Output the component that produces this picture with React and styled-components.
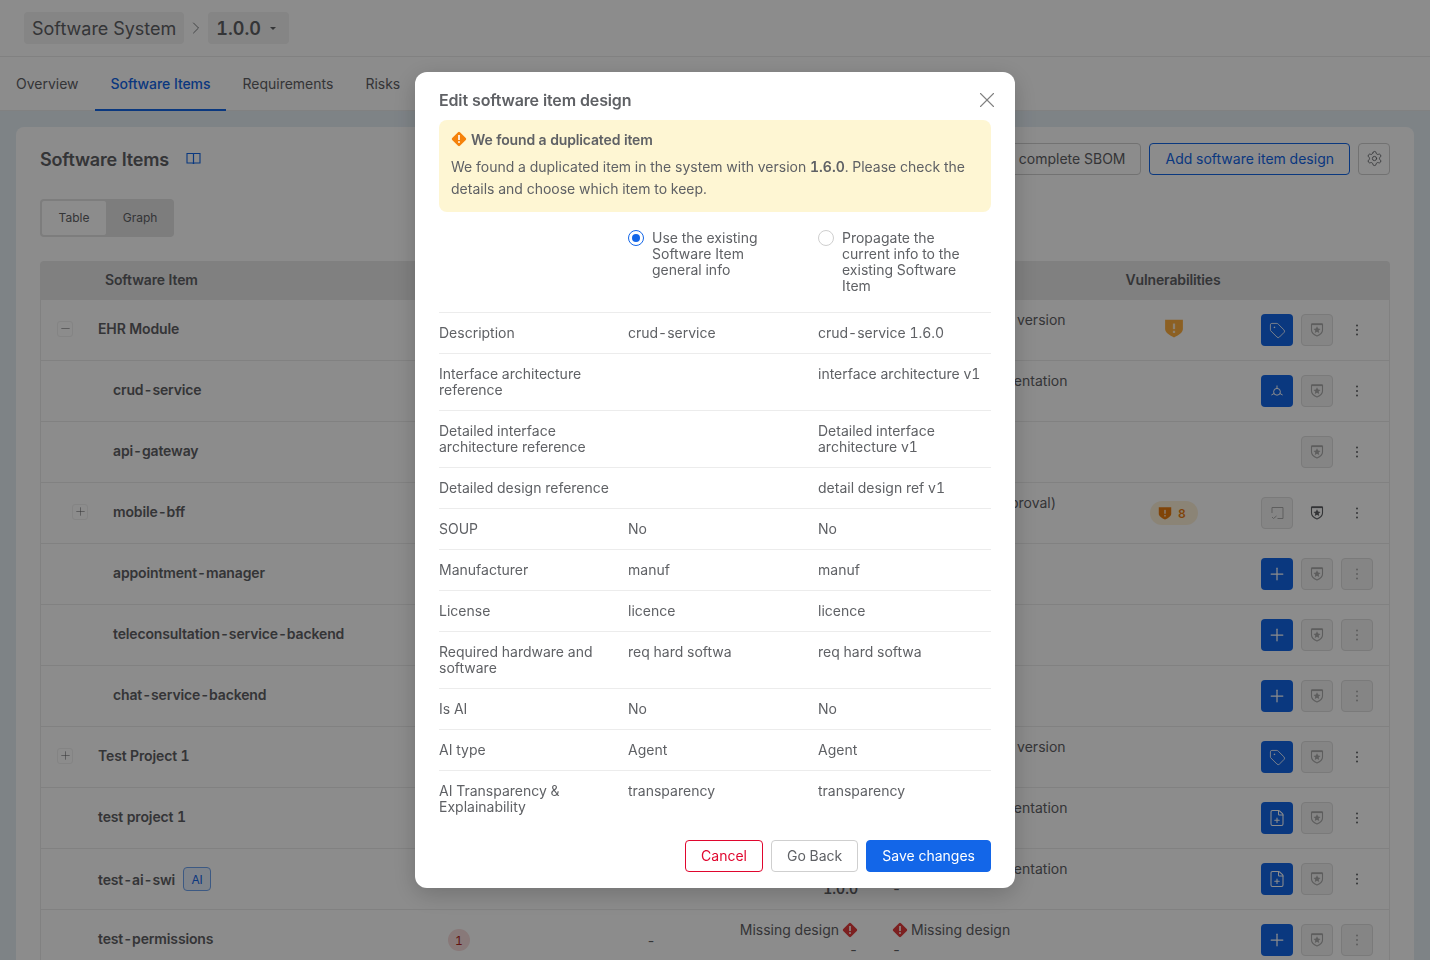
import React from "react";
import styled, { createGlobalStyle } from "styled-components";
import { Plus, Minus, Tag, Settings, ChevronRight, X, FilePlus } from "lucide-react";

const INK = "#5f6165";
const BLUE = "#1366e8";

const GlobalStyle = createGlobalStyle`
  html, body {
    margin: 0;
    height: 100%;
    overflow: hidden;
    background: #e6eff5;
    font-family: "Inter", "Liberation Sans", sans-serif;
    font-size: 14px;
    font-feature-settings: "tnum";
    color: ${INK};
  }
  * { box-sizing: border-box; }
`;

// small drawings that the icon packages don't have
const ShieldStar = () => (
  <svg width="16" height="16" viewBox="0 0 16 16" fill="none">
    <path d="M2.5 2.2h11V8c0 2.900-2.600 4.800-5.500 6-2.900-1.200-5.500-3.100-5.500-6V2.200z" stroke="currentColor" strokeWidth="1.1" />
    <path d="M2.500 2.200h11" stroke="currentColor" strokeWidth="1.800" />
    <path d="M8 4.300l1.100 2.300 2.400.300-1.800 1.600.5 2.400L8 9.700l-2.200 1.200.5-2.400-1.800-1.600 2.400-.300L8 4.300z" fill="currentColor" />
  </svg>
);

const ShieldAlert = ({ size }) => (
  <svg width={size} height={size} viewBox="0 0 18 18">
    <path d="M1 1.500h16V10c0 3.200-4 5.800-8 7.500C5 15.800 1 13.200 1 10V1.500z" fill="currentColor" />
    <rect x="8" y="5" width="2" height="5" fill="#ffffff" opacity="0.75" />
    <rect x="8" y="11.500" width="2" height="2" fill="#ffffff" opacity="0.75" />
  </svg>
);

const DiamondSvg = styled.svg`
  flex: none;
`;

const Diamond = ({ color, size = 16 }) => (
  <DiamondSvg width={size} height={size} viewBox="0 0 14 14">
    <rect x="2.200" y="2.200" width="9.600" height="9.600" rx="1.200" transform="rotate(45 7 7)" fill={color} />
    <rect x="6.300" y="3.500" width="1.400" height="4.400" fill="#ffffff" />
    <rect x="6.300" y="8.900" width="1.400" height="1.500" fill="#ffffff" />
  </DiamondSvg>
);

const BookIcon = () => (
  <svg width="15" height="14" viewBox="0 0 15 14" fill="none" stroke="currentColor" strokeWidth="1.100">
    <path d="M1 1.500h5.800c.4 0 .7.300.7.700V12c0-.6-.3-1-.9-1H1V1.500z" />
    <path d="M14 1.500H8.200c-.4 0-.7.300-.7.700V12c0-.6.300-1 .9-1H14V1.500z" />
  </svg>
);

const HubIcon = () => (
  <svg width="14" height="14" viewBox="0 0 14 14" fill="none" stroke="currentColor" strokeWidth="1">
    <circle cx="7" cy="7.800" r="3.400" />
    <path d="M7 4.400V1.500M4 9.500l-2.600 1.500M10 9.500l2.600 1.500" />
  </svg>
);

const ReviewIcon = () => (
  <svg width="16" height="16" viewBox="0 0 16 16" fill="none" stroke="currentColor" strokeWidth="1">
    <path d="M3 8V2.500h11v11H8.500" />
    <path d="M3 12l1.500 1.500L7.500 11" />
  </svg>
);

const Dots = () => (
  <svg width="4" height="14" viewBox="0 0 4 14" fill="currentColor">
    <rect x="1" y="1.500" width="2" height="2" rx="1" />
    <rect x="1" y="6" width="2" height="2" rx="1" />
    <rect x="1" y="10.500" width="2" height="2" rx="1" />
  </svg>
);

const Page = styled.div`
  height: 960px;
  overflow: hidden;
`;

const TopBar = styled.header`
  height: 57px;
  padding: 12px 24px 0;
  display: flex;
  align-items: flex-start;
  background: #ffffff;
  border-bottom: 1px solid #ececec;
`;

const Crumb = styled.div`
  height: 32px;
  padding: ${(p) => (p.$strong ? "0 13px 0 8px" : "0 8px")};
  display: flex;
  align-items: center;
  gap: 9px;
  border-radius: 4px;
  background: #f2f2f2;
  font-size: 18px;
  font-weight: ${(p) => (p.$strong ? 600 : 400)};
`;

const CrumbSep = styled.span`
  width: 24px;
  height: 32px;
  display: flex;
  align-items: center;
  justify-content: center;
`;

const Caret = styled.span`
  width: 0;
  height: 0;
  border-left: 3.5px solid transparent;
  border-right: 3.5px solid transparent;
  border-top: 3.5px solid ${INK};
`;

const Tabs = styled.nav`
  height: 54px;
  display: flex;
  background: #ffffff;
  border-bottom: 1px solid #ececec;
`;

const TabItem = styled.div`
  height: 54px;
  padding: 0 16px;
  display: flex;
  align-items: center;
  font-weight: ${(p) => (p.$active ? 500 : 400)};
  letter-spacing: ${(p) => (p.$active ? "-0.07px" : "0")};
  color: ${(p) => (p.$active ? BLUE : INK)};
  border-bottom: 2px solid ${(p) => (p.$active ? BLUE : "transparent")};
`;

const Content = styled.main`
  padding: 16px 16px 0;
`;

const Card = styled.section`
  padding: 16px 24px 0;
  background: #ffffff;
  border-radius: 8px 8px 0 0;
`;

const CardHead = styled.div`
  height: 32px;
  display: flex;
  align-items: center;
  justify-content: space-between;
`;

const CardTitle = styled.h2`
  margin: 0;
  display: flex;
  align-items: center;
  gap: 17px;
  font-size: 18px;
  font-weight: 600;
  letter-spacing: -0.01em;
  color: ${INK};
  svg { color: ${BLUE}; }
`;

const HeadActions = styled.div`
  display: flex;
  gap: 8px;
`;

const OutlineButton = styled.button`
  height: 32px;
  padding: ${(p) => (p.$square ? "0 0 1px" : "0 15px 2px")};
  width: ${(p) => (p.$square ? "32px" : "auto")};
  display: flex;
  align-items: center;
  justify-content: center;
  font: inherit;
  background: #ffffff;
  border-radius: 4px;
  border: 1px solid ${(p) => (p.$primary ? BLUE : "#cfcfcf")};
  color: ${(p) => (p.$primary ? BLUE : INK)};
`;

const Segment = styled.div`
  width: 134px;
  height: 38px;
  margin: 24px 0;
  padding: 2px;
  display: flex;
  background: #e3e3e3;
  border-radius: 4px;
`;

const SegmentItem = styled.div`
  flex: none;
  height: 34px;
  padding-bottom: 1px;
  width: ${(p) => (p.$active ? "64px" : "68px")};
  display: flex;
  align-items: center;
  justify-content: center;
  font-size: 12px;
  border-radius: 2px;
  background: ${(p) => (p.$active ? "#ffffff" : "transparent")};
`;

const TableGrid = "379px 78px 244px 133px 215px 168px 1fr";

const HeadRow = styled.div`
  height: 39px;
  padding-bottom: 2px;
  display: grid;
  grid-template-columns: ${TableGrid};
  align-items: center;
  background: #e9e9e9;
  border-radius: 4px 4px 0 0;
  font-weight: 600;
  letter-spacing: -0.01em;
  color: ${INK};
`;

const HeadCell = styled.div`
  grid-column: ${(p) => p.$col};
  text-align: ${(p) => p.$align || "left"};
  padding-left: ${(p) => p.$pad || 0}px;
`;

const Row = styled.div`
  height: 61px;
  display: grid;
  grid-template-columns: ${TableGrid};
  align-items: center;
  border: 1px solid #ececec;
  border-top: 0;
`;

const NameCell = styled.div`
  padding: 0 0 ${(p) => (p.$tagged ? 0 : 3)}px ${(p) => 16 + p.$level * 15}px;
  display: flex;
  align-items: center;
  gap: 8px;
  font-weight: 600;
  letter-spacing: -0.01em;
`;

const ToggleSlot = styled.span`
  width: 16px;
  height: 16px;
  margin-right: 17px;
  display: flex;
  align-items: center;
  justify-content: center;
  border-radius: 3px;
  border: 1px solid ${(p) => (p.$empty ? "transparent" : "#f0f0f0")};
`;

const AiTag = styled.span`
  width: 28px;
  height: 24px;
  display: flex;
  align-items: center;
  justify-content: center;
  font-size: 12px;
  font-weight: 400;
  color: ${BLUE};
  background: #e8f0fd;
  border: 1px solid #6ea3ee;
  border-radius: 4px;
`;

const CountCell = styled.div`
  display: flex;
  justify-content: center;
`;

const CountBadge = styled.span`
  width: 22px;
  height: 22px;
  display: flex;
  align-items: center;
  justify-content: center;
  font-size: 12px;
  color: #b3261e;
  background: #f7dcdc;
  border-radius: 50%;
`;

const DashCell = styled.div`
  padding-left: 62px;
  text-align: center;
`;

const StatusCell = styled.div`
  line-height: 20px;
  white-space: nowrap;
  padding: ${(p) => (p.$end ? "0 17px 0 0" : "0 0 0 17px")};
`;

const StatusLine = styled.div`
  display: flex;
  justify-content: ${(p) => (p.$end ? "flex-end" : "flex-start")};
  align-items: center;
  gap: 3px;
  font-weight: ${(p) => (p.$strong ? 600 : 400)};
`;

const VulnCell = styled.div`
  display: flex;
  justify-content: center;
`;

const VulnIcon = styled.span`
  display: flex;
  margin-top: -4px;
  color: #ffb040;
`;

const VulnPill = styled.span`
  width: 48px;
  height: 24px;
  padding-left: 8px;
  display: flex;
  align-items: center;
  gap: 6px;
  font-size: 12px;
  font-weight: 600;
  color: #ea7d10;
  background: #fdf0d8;
  border-radius: 12px;
  svg { color: #ea7d10; }
`;

const ActionCell = styled.div`
  padding-left: 3px;
  display: flex;
  gap: 8px;
`;

const IconBox = styled.span`
  width: 32px;
  height: 32px;
  display: flex;
  align-items: center;
  justify-content: center;
  border-radius: 4px;
  border: 1px solid ${(p) => (p.$kind === "muted" ? "#dedede" : "transparent")};
  background: ${(p) =>
    p.$kind === "primary" ? BLUE : p.$kind === "muted" ? "#f2f2f2" : "transparent"};
  color: ${(p) =>
    p.$kind === "primary" ? "#ffffff" : p.$kind === "muted" ? "#ababab" : INK};
  visibility: ${(p) => (p.$hidden ? "hidden" : "visible")};
`;

const Overlay = styled.div`
  position: fixed;
  inset: 0;
  background: rgba(0, 0, 0, 0.45);
  display: flex;
  justify-content: center;
  align-items: flex-start;
  padding-top: 72px;
`;

const Modal = styled.div`
  width: 600px;
  height: 816px;
  padding: 16px 24px;
  background: #ffffff;
  border-radius: 12px;
  box-shadow: 0 6px 24px rgba(0, 0, 0, 0.2);
`;

const ModalHead = styled.div`
  height: 24px;
  margin-bottom: 8px;
  display: flex;
  align-items: center;
  justify-content: space-between;
`;

const ModalTitle = styled.h3`
  margin: 0;
  font-size: 16px;
  font-weight: 600;
  letter-spacing: -0.01em;
  color: ${INK};
`;

const CloseIcon = styled.span`
  display: flex;
  margin-right: -9px;
  color: #808080;
`;

const Alert = styled.div`
  height: 92px;
  padding: 8px 12px;
  background: #fef6d3;
  border-radius: 8px;
`;

const AlertTitle = styled.div`
  height: 22px;
  display: flex;
  align-items: center;
  gap: 4px;
  font-weight: 600;
  letter-spacing: -0.01em;
`;

const AlertText = styled.p`
  margin: 6px 0 0;
  line-height: 22px;
  b { font-weight: 600; }
`;

const CompareGrid = "189px 190px 1fr";

const ChoiceRow = styled.div`
  padding: 18px 0 18px;
  display: grid;
  grid-template-columns: ${CompareGrid};
  border-bottom: 1px solid #ececec;
`;

const Choice = styled.div`
  grid-column: ${(p) => p.$col};
  width: 160px;
  display: flex;
  gap: 8px;
  line-height: 16px;
`;

const Radio = styled.span`
  flex: none;
  width: 16px;
  height: 16px;
  border-radius: 50%;
  border: 1px solid ${(p) => (p.$on ? BLUE : "#cfcfcf")};
  display: flex;
  align-items: center;
  justify-content: center;
  &::after {
    content: "";
    width: 8px;
    height: 8px;
    border-radius: 50%;
    background: ${(p) => (p.$on ? BLUE : "transparent")};
  }
`;

const CompareRow = styled.div`
  padding: 12px 0;
  display: grid;
  grid-template-columns: ${CompareGrid};
  line-height: 16px;
  border-bottom: ${(p) => (p.$last ? "0" : "1px solid #ececec")};
`;

const CompareCell = styled.div`
  padding-right: 8px;
`;

const Footer = styled.div`
  margin-top: 13px;
  display: flex;
  justify-content: flex-end;
  gap: 8px;
`;

const FootButton = styled.button`
  height: 32px;
  padding: 0 15px 2px;
  font: inherit;
  border-radius: 4px;
  border: 1px solid ${(p) =>
    p.$kind === "danger" ? "#e0062e" : p.$kind === "primary" ? BLUE : "#cfcfcf"};
  background: ${(p) => (p.$kind === "primary" ? BLUE : "#ffffff")};
  color: ${(p) =>
    p.$kind === "danger" ? "#e0062e" : p.$kind === "primary" ? "#ffffff" : INK};
`;

const rows = [
  { name: "EHR Module", level: 0, toggle: "minus", right: ["Missing newest version", "-"], vuln: "icon", action: "tag" },
  { name: "crud-service", level: 1, right: ["Missing implementation", "-"], action: "hub" },
  { name: "api-gateway", level: 1, action: "none" },
  { name: "mobile-bff", level: 1, toggle: "plus", right: ["Missing (for approval)", "-"], vuln: "pill", action: "review", shieldOn: true },
  { name: "appointment-manager", level: 1, action: "plus", boxed: true },
  { name: "teleconsultation-service-backend", level: 1, action: "plus", boxed: true },
  { name: "chat-service-backend", level: 1, action: "plus", boxed: true },
  { name: "Test Project 1", level: 0, toggle: "plus", right: ["Missing newest version", "-"], action: "tag" },
  { name: "test project 1", level: 0, right: ["Missing implementation", "-"], action: "file" },
  { name: "test-ai-swi", level: 0, ai: true, left: ["Missing design", "1.0.0"], right: ["Missing implementation", "-"], action: "file" },
  { name: "test-permissions", level: 0, count: 1, dash: true, missing: true, action: "plus", boxed: true },
];

const actionIcons = {
  tag: <Tag size={17} strokeWidth={1.2} />,
  hub: <HubIcon />,
  plus: <Plus size={20} strokeWidth={1.5} />,
  file: <FilePlus size={18} strokeWidth={1.4} />,
};

const compare = [
  ["Description", "crud-service", "crud-service 1.6.0"],
  ["Interface architecture reference", "", "interface architecture v1"],
  ["Detailed interface architecture reference", "", "Detailed interface architecture v1"],
  ["Detailed design reference", "", "detail design ref v1"],
  ["SOUP", "No", "No"],
  ["Manufacturer", "manuf", "manuf"],
  ["License", "licence", "licence"],
  ["Required hardware and software", "req hard softwa", "req hard softwa"],
  ["Is AI", "No", "No"],
  ["AI type", "Agent", "Agent"],
  ["AI Transparency & Explainability", "transparency", "transparency"],
];

const TableRow = ({ row }) => (
  <Row>
    <NameCell $level={row.level} $tagged={row.ai}>
      <ToggleSlot $empty={!row.toggle}>
        {row.toggle === "plus" && <Plus size={13} strokeWidth={1} />}
        {row.toggle === "minus" && <Minus size={13} strokeWidth={1} />}
      </ToggleSlot>
      {row.name}
      {row.ai && <AiTag>AI</AiTag>}
    </NameCell>
    <CountCell>{row.count && <CountBadge>{row.count}</CountBadge>}</CountCell>
    <DashCell>{row.dash && "-"}</DashCell>
    <StatusCell $end>
      {row.missing && (
        <>
          <StatusLine $end>
            Missing design <Diamond color="#e23b3b" />
          </StatusLine>
          <StatusLine $end>-</StatusLine>
        </>
      )}
      {row.left && (
        <>
          <StatusLine $end>{row.left[0]}</StatusLine>
          <StatusLine $end $strong>{row.left[1]}</StatusLine>
        </>
      )}
    </StatusCell>
    <StatusCell>
      {row.missing && (
        <>
          <StatusLine>
            <Diamond color="#e23b3b" />
            Missing design
          </StatusLine>
          <StatusLine>-</StatusLine>
        </>
      )}
      {row.right && (
        <>
          <StatusLine>
            <Diamond color="#e23b3b" />
            {row.right[0]}
          </StatusLine>
          <StatusLine>{row.right[1]}</StatusLine>
        </>
      )}
    </StatusCell>
    <VulnCell>
      {row.vuln === "icon" && (
        <VulnIcon>
          <ShieldAlert size={20} />
        </VulnIcon>
      )}
      {row.vuln === "pill" && (
        <VulnPill>
          <ShieldAlert size={14} />8
        </VulnPill>
      )}
    </VulnCell>
    <ActionCell>
      {row.action === "review" ? (
        <IconBox $kind="muted">
          <ReviewIcon />
        </IconBox>
      ) : (
        <IconBox $kind="primary" $hidden={row.action === "none"}>
          {actionIcons[row.action]}
        </IconBox>
      )}
      <IconBox $kind={row.shieldOn ? "plain" : "muted"}>
        <ShieldStar />
      </IconBox>
      <IconBox $kind={row.boxed ? "muted" : "plain"}>
        <Dots />
      </IconBox>
    </ActionCell>
  </Row>
);

export default function App() {
  return (
    <>
      <GlobalStyle />
      <Page>
        <TopBar>
          <Crumb>Software System</Crumb>
          <CrumbSep>
            <ChevronRight size={20} strokeWidth={1} />
          </CrumbSep>
          <Crumb $strong>
            1.0.0 <Caret />
          </Crumb>
        </TopBar>
        <Tabs>
          <TabItem>Overview</TabItem>
          <TabItem $active>Software Items</TabItem>
          <TabItem>Requirements</TabItem>
          <TabItem>Risks</TabItem>
        </Tabs>
        <Content>
          <Card>
            <CardHead>
              <CardTitle>
                Software Items <BookIcon />
              </CardTitle>
              <HeadActions>
                <OutlineButton>Download complete SBOM</OutlineButton>
                <OutlineButton $primary>Add software item design</OutlineButton>
                <OutlineButton $square>
                  <Settings size={17} strokeWidth={1.2} />
                </OutlineButton>
              </HeadActions>
            </CardHead>
            <Segment>
              <SegmentItem $active>Table</SegmentItem>
              <SegmentItem>Graph</SegmentItem>
            </Segment>
            <HeadRow>
              <HeadCell $col={1} $pad={65}>Software Item</HeadCell>
              <HeadCell $col={6} $align="center">Vulnerabilities</HeadCell>
            </HeadRow>
            {rows.map((row) => (
              <TableRow key={row.name} row={row} />
            ))}
          </Card>
        </Content>
      </Page>
      <Overlay>
        <Modal>
          <ModalHead>
            <ModalTitle>Edit software item design</ModalTitle>
            <CloseIcon>
              <X size={26} strokeWidth={1} />
            </CloseIcon>
          </ModalHead>
          <Alert>
            <AlertTitle>
              <Diamond color="#f5820b" size={16} />
              We found a duplicated item
            </AlertTitle>
            <AlertText>
              We found a duplicated item in the system with version <b>1.6.0</b>. Please check the
              details and choose which item to keep.
            </AlertText>
          </Alert>
          <ChoiceRow>
            <Choice $col={2}>
              <Radio $on />
              <span>Use the existing Software Item general info</span>
            </Choice>
            <Choice $col={3}>
              <Radio />
              <span>Propagate the current info to the existing Software Item</span>
            </Choice>
          </ChoiceRow>
          {compare.map(([label, current, existing], i) => (
            <CompareRow key={label} $last={i === compare.length - 1}>
              <CompareCell>{label}</CompareCell>
              <CompareCell>{current}</CompareCell>
              <CompareCell>{existing}</CompareCell>
            </CompareRow>
          ))}
          <Footer>
            <FootButton $kind="danger">Cancel</FootButton>
            <FootButton>Go Back</FootButton>
            <FootButton $kind="primary">Save changes</FootButton>
          </Footer>
        </Modal>
      </Overlay>
    </>
  );
}
